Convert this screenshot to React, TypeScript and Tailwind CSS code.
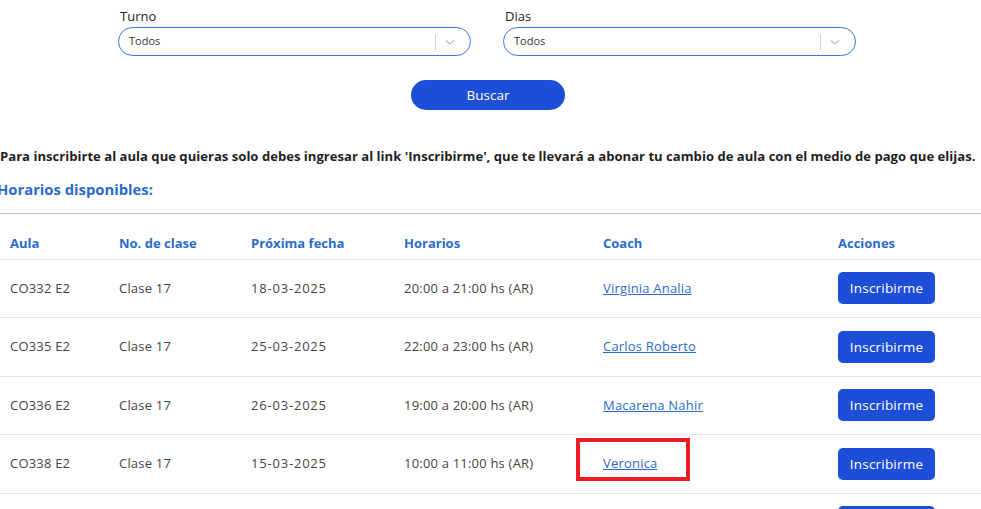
const rows = [
  { aula: "CO332 E2", clase: "Clase 17", fecha: "18-03-2025", horario: "20:00 a 21:00 hs (AR)", coach: "Virginia Analia" },
  { aula: "CO335 E2", clase: "Clase 17", fecha: "25-03-2025", horario: "22:00 a 23:00 hs (AR)", coach: "Carlos Roberto" },
  { aula: "CO336 E2", clase: "Clase 17", fecha: "26-03-2025", horario: "19:00 a 20:00 hs (AR)", coach: "Macarena Nahir" },
  { aula: "CO338 E2", clase: "Clase 17", fecha: "15-03-2025", horario: "10:00 a 11:00 hs (AR)", coach: "Veronica", marked: true },
  { aula: "CO340 E2", clase: "Clase 17", fecha: "20-03-2025", horario: "18:00 a 19:00 hs (AR)", coach: "Lucia Belen" },
];

function Select({ label }: { label: string }) {
  return (
    <div className="w-[353px]">
      <div className="text-[13px] leading-[18px] text-[#222] pl-[2px] mt-[7px]">{label}</div>
      <div className="mt-[2px] h-[29px] rounded-full border border-[#3a78d6] flex items-center pl-[10px] pr-[14px]">
        <span className="text-[11px] text-[#333] flex-1">Todos</span>
        <span className="w-px h-[16px] bg-[#cfcfcf]" />
        <svg width="12" height="12" viewBox="0 0 12 12" className="ml-[8px]">
          <path d="M2 4.5 L6 8 L10 4.5" fill="none" stroke="#bdbdbd" strokeWidth="1.3" />
        </svg>
      </div>
    </div>
  );
}

export default function App() {
  return (
    <div className="w-[981px] h-[509px] overflow-hidden bg-white font-['Open_Sans',sans-serif]">
      <div className="flex gap-[32px] pl-[118px]">
        <Select label="Turno" />
        <Select label="Dias" />
      </div>

      <button className="ml-[411px] mt-[24px] w-[154px] h-[30px] rounded-full bg-[#1d4ed8] text-white text-[13.5px] font-medium">
        Buscar
      </button>

      <p className="mt-[36px] text-[13.1px] font-bold text-[#1f1f1f] leading-[20px] whitespace-nowrap">
        Para inscribirte al aula que quieras solo debes ingresar al link 'Inscribirme', que te llevará a abonar tu cambio de aula con el medio de pago que elijas.
      </p>

      <h2 className="-ml-[3px] mt-[13px] text-[14.8px] font-bold text-[#2a6bcc] leading-[20px]">
        Horarios disponibles:
      </h2>

      <div className="mt-[14px] border-t border-[#aac7ee]">
        <table className="w-full table-fixed border-collapse text-left">
          <colgroup>
            <col className="w-[109px]" />
            <col className="w-[132px]" />
            <col className="w-[153px]" />
            <col className="w-[199px]" />
            <col className="w-[235px]" />
            <col />
          </colgroup>
          <thead>
            <tr className="h-[45px] border-b border-[#e3e3e3]">
              {["Aula", "No. de clase", "Próxima fecha", "Horarios", "Coach", "Acciones"].map((h) => (
                <th key={h} className="pl-[10px] pt-[14px] text-[13px] font-bold text-[#2a6bcc]">
                  {h}
                </th>
              ))}
            </tr>
          </thead>
          <tbody className="text-[13px] tracking-[0.2px] text-[#444]">
            {rows.map((r) => (
              <tr key={r.aula} className="h-[58.5px] border-b border-[#e3e3e3]">
                <td className="pl-[10px]">{r.aula}</td>
                <td className="pl-[10px]">{r.clase}</td>
                <td className="pl-[10px] tracking-[0.8px]">{r.fecha}</td>
                <td className="pl-[10px]">{r.horario}</td>
                <td className="pl-[10px]">
                  {r.marked ? (
                    <div className="-ml-[27px] mb-[9px] w-[114px] h-[43px] border-4 border-[#ee1c25] pl-[23px] pt-[13px] leading-[17px]">
                      <a href="#" className="underline text-[#2a6bcc]">{r.coach}</a>
                    </div>
                  ) : (
                    <a href="#" className="underline text-[#2a6bcc]">{r.coach}</a>
                  )}
                </td>
                <td className="pl-[10px]">
                  <button className="w-[97px] h-[32px] rounded-[5px] bg-[#1d4ed8] text-white text-[13.5px] font-medium">
                    Inscribirme
                  </button>
                </td>
              </tr>
            ))}
          </tbody>
        </table>
      </div>
    </div>
  );
}
